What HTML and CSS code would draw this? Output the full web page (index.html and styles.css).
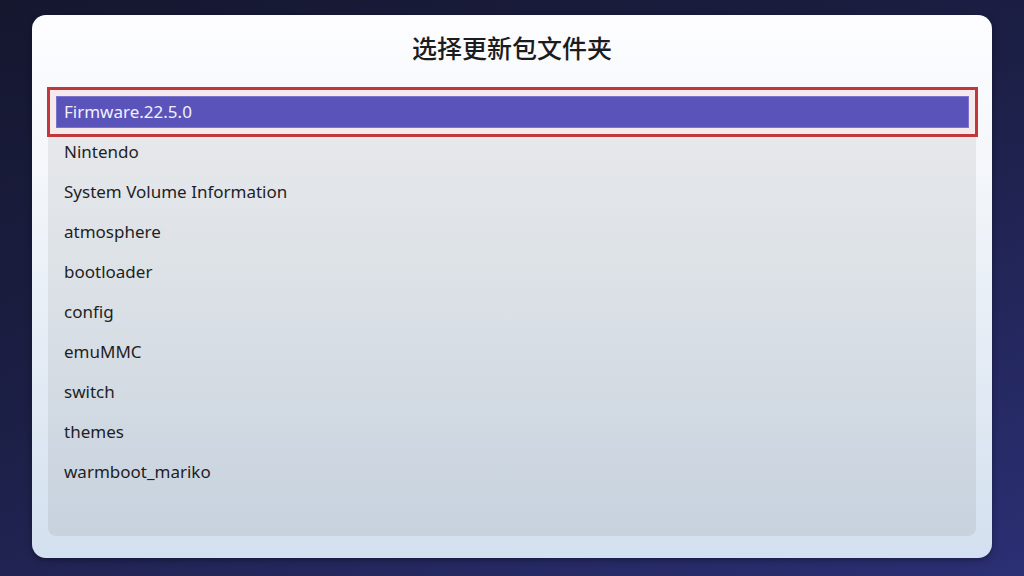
FILE: index.html
```html
<!DOCTYPE html>
<html lang="zh">
<head>
<meta charset="utf-8">
<title>选择更新包文件夹</title>
<link rel="stylesheet" href="styles.css">
</head>
<body>
<div class="card">
  <h1 class="title">选择更新包文件夹</h1>
  <div class="panel">
    <ul class="list">
      <li class="row selected">Firmware.22.5.0</li>
      <li class="row">Nintendo</li>
      <li class="row">System Volume Information</li>
      <li class="row">atmosphere</li>
      <li class="row">bootloader</li>
      <li class="row">config</li>
      <li class="row">emuMMC</li>
      <li class="row">switch</li>
      <li class="row">themes</li>
      <li class="row">warmboot_mariko</li>
    </ul>
  </div>
</div>
</body>
</html>
```
FILE: styles.css
```css
html, body {
  margin: 0;
  padding: 0;
  width: 1024px;
  height: 576px;
  overflow: hidden;
}
body {
  background: linear-gradient(160deg, #15172f 0%, #1c1f45 45%, #2b2f74 100%);
  font-family: "Noto Sans", "Noto Sans CJK SC", sans-serif;
  padding-top: 15px;
  box-sizing: border-box;
}
.card {
  margin: 0 32px;
  height: 543px;
  box-sizing: border-box;
  border-radius: 14px;
  background: linear-gradient(180deg, #fdfdff 0%, #f3f6fa 30%, #d3e0ef 100%);
  box-shadow: 0 2px 6px rgba(0, 0, 0, 0.35);
  padding: 16px 16px 22px;
  display: flex;
  flex-direction: column;
}
.title {
  margin: 0 0 25px;
  text-align: center;
  font-family: "Noto Sans CJK SC", sans-serif;
  font-weight: 500;
  font-size: 25px;
  line-height: 32px;
  color: #1c1c1e;
}
.panel {
  flex: 1;
  border-radius: 2px 2px 8px 8px;
  background: linear-gradient(180deg, #e9eaec 0%, #dde2e7 40%, #c7d2de 100%);
}
.list {
  list-style: none;
  margin: 0;
  padding: 8px 7px 8px 8px;
  display: flex;
  flex-direction: column;
  gap: 8px;
}
.row {
  height: 32px;
  line-height: 32px;
  padding-left: 8px;
  font-size: 17px;
  color: #1e1f24;
}
.row.selected {
  background: #5a53b9;
  color: #f1f0ff;
  box-shadow: inset 0 0 0 1px #7a74cf, 0 0 0 6px #f6e9ec, 0 0 0 9px #c0383c;
}
```
